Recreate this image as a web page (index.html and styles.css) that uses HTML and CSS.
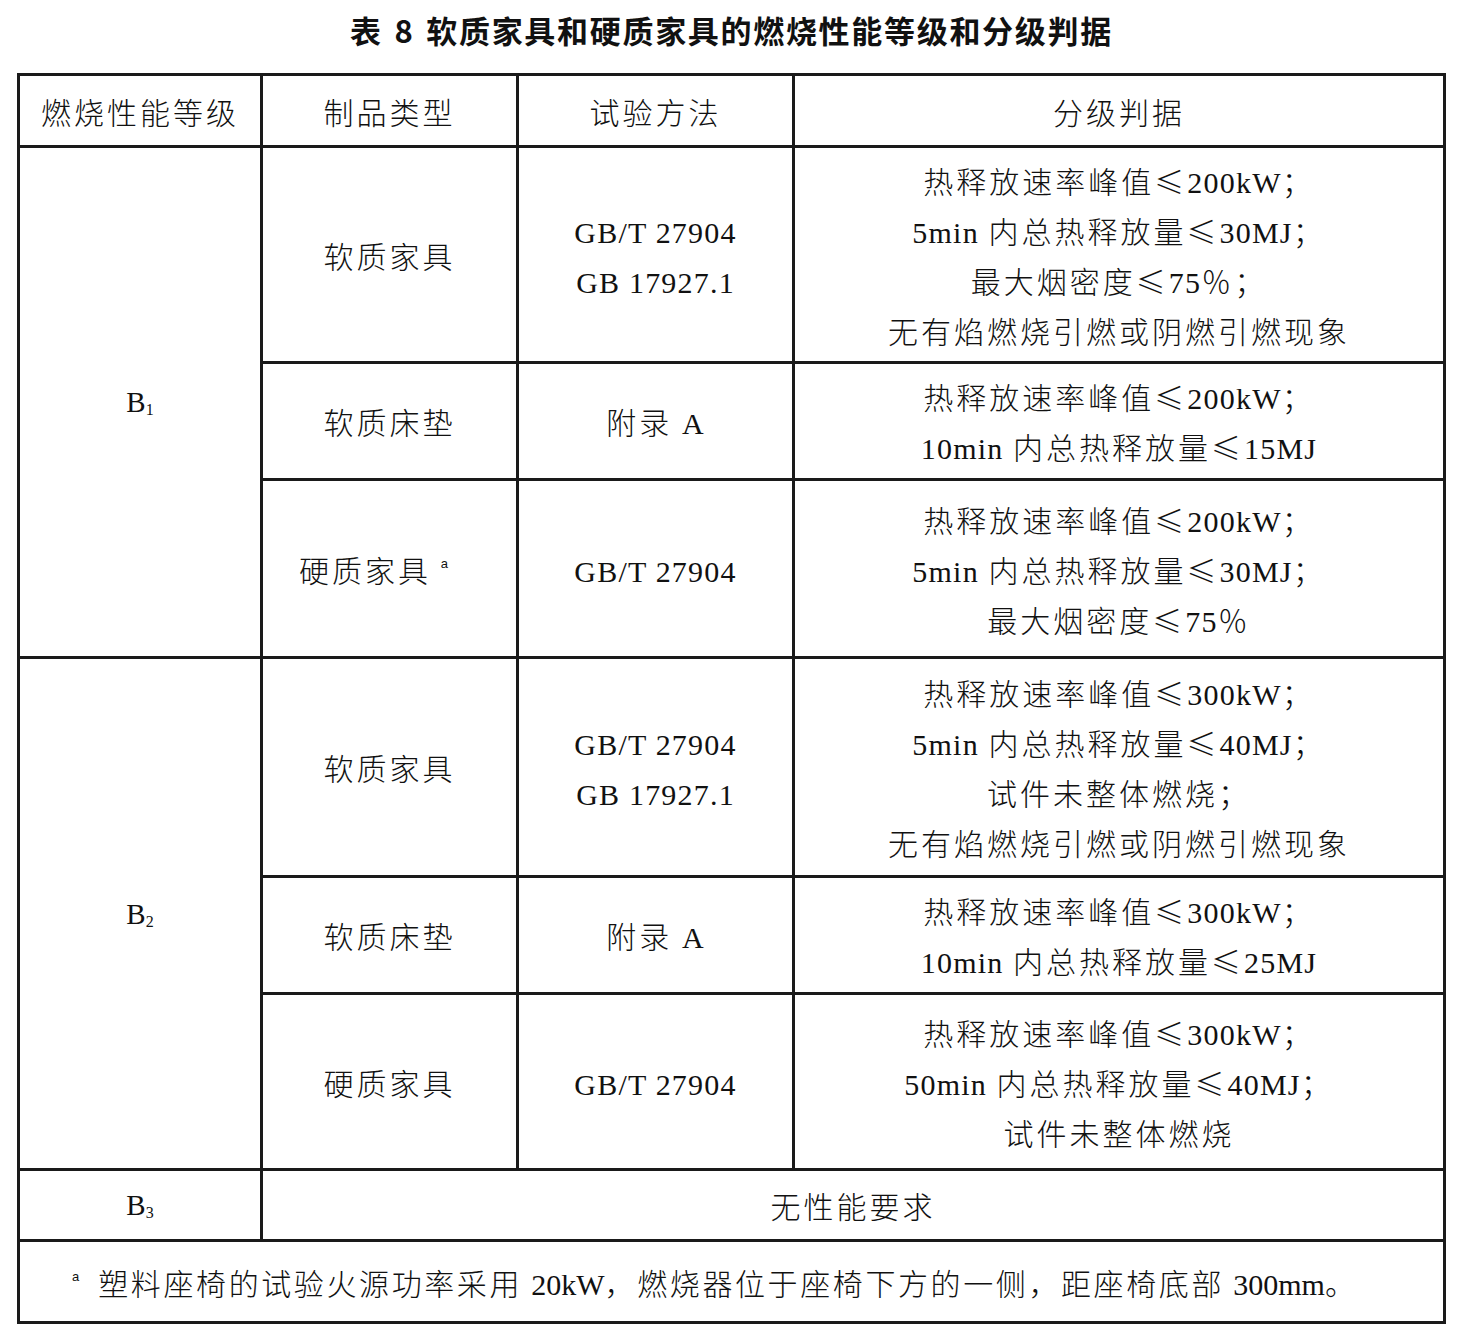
FILE: index.html
```html
<!DOCTYPE html>
<html lang="zh-CN">
<head>
<meta charset="utf-8">
<title>表 8 软质家具和硬质家具的燃烧性能等级和分级判据</title>
<link rel="stylesheet" href="styles.css">
</head>
<body>
<div class="page">
  <h1 class="title">表 8 软质家具和硬质家具的燃烧性能等级和分级判据</h1>
  <table class="grade">
    <colgroup>
      <col class="c1"><col class="c2"><col class="c3"><col class="c4">
    </colgroup>
    <tr class="r-head">
      <td>燃烧性能等级</td>
      <td>制品类型</td>
      <td>试验方法</td>
      <td>分级判据</td>
    </tr>
    <tr class="r1">
      <td rowspan="3" class="lvl">B<sub>1</sub></td>
      <td>软质家具</td>
      <td><span class="lat">GB/T 27904</span><br><span class="lat">GB 17927.1</span></td>
      <td>热释放速率峰值≤<span class="lat">200kW</span>；<br><span class="lat">5min</span> 内总热释放量≤<span class="lat">30MJ</span>；<br>最大烟密度≤<span class="lat">75</span>％；<br>无有焰燃烧引燃或阴燃引燃现象</td>
    </tr>
    <tr class="r2">
      <td>软质床垫</td>
      <td>附录 <span class="lat">A</span></td>
      <td>热释放速率峰值≤<span class="lat">200kW</span>；<br><span class="lat">10min</span> 内总热释放量≤<span class="lat">15MJ</span></td>
    </tr>
    <tr class="r3">
      <td class="noted">硬质家具 <sup class="note">a</sup></td>
      <td><span class="lat">GB/T 27904</span></td>
      <td>热释放速率峰值≤<span class="lat">200kW</span>；<br><span class="lat">5min</span> 内总热释放量≤<span class="lat">30MJ</span>；<br>最大烟密度≤<span class="lat">75</span>％</td>
    </tr>
    <tr class="r4">
      <td rowspan="3" class="lvl">B<sub>2</sub></td>
      <td>软质家具</td>
      <td><span class="lat">GB/T 27904</span><br><span class="lat">GB 17927.1</span></td>
      <td>热释放速率峰值≤<span class="lat">300kW</span>；<br><span class="lat">5min</span> 内总热释放量≤<span class="lat">40MJ</span>；<br>试件未整体燃烧；<br>无有焰燃烧引燃或阴燃引燃现象</td>
    </tr>
    <tr class="r5">
      <td>软质床垫</td>
      <td>附录 <span class="lat">A</span></td>
      <td>热释放速率峰值≤<span class="lat">300kW</span>；<br><span class="lat">10min</span> 内总热释放量≤<span class="lat">25MJ</span></td>
    </tr>
    <tr class="r6">
      <td>硬质家具</td>
      <td><span class="lat">GB/T 27904</span></td>
      <td>热释放速率峰值≤<span class="lat">300kW</span>；<br><span class="lat">50min</span> 内总热释放量≤<span class="lat">40MJ</span>；<br>试件未整体燃烧</td>
    </tr>
    <tr class="r7">
      <td class="lvl">B<sub>3</sub></td>
      <td colspan="3">无性能要求</td>
    </tr>
    <tr class="r-foot">
      <td colspan="4" class="foot"><sup class="note fnote">a</sup>塑料座椅的试验火源功率采用 <span class="lat">20kW</span>，燃烧器位于座椅下方的一侧，距座椅底部 <span class="lat">300mm</span>。</td>
    </tr>
  </table>
</div>
</body>
</html>
```
FILE: styles.css
```css
html, body {
  margin: 0;
  padding: 0;
  background: #ffffff;
}

.page {
  width: 1462px;
  padding: 0 0 0 17px;
  box-sizing: border-box;
  color: #111111;
  font-family: "Noto Sans CJK SC", sans-serif;
}

.title {
  width: 1429px;
  margin: 0;
  height: 73px;
  padding-top: 12px;
  box-sizing: border-box;
  text-align: center;
  font-size: 31px;
  line-height: 36px;
  font-weight: 700;
  letter-spacing: 1.7px;
  word-spacing: 3px;
}

.grade {
  border-collapse: collapse;
  table-layout: fixed;
  width: 1429px;
  border: 3px solid #1a1a1a;
  font-size: 30px;
  font-weight: 300;
  letter-spacing: 3px;
}

.c1 { width: 243px; }
.c2 { width: 256px; }
.c3 { width: 276px; }
.c4 { width: 651px; }

.grade td {
  border: 3px solid #1a1a1a;
  padding: 0;
  text-align: center;
  vertical-align: middle;
  line-height: 50px;
}

.r-head { height: 72px; }
.r1 { height: 216px; }
.r2 { height: 117px; }
.r3 { height: 178px; }
.r4 { height: 219px; }
.r5 { height: 117px; }
.r6 { height: 176px; }
.r7 { height: 71px; }
.r-foot { height: 82px; }

.lat {
  font-family: "Liberation Serif", serif;
  font-size: 30px;
  letter-spacing: 1.2px;
  line-height: 0;
}

.lvl {
  font-family: "Liberation Serif", serif;
  font-size: 29px;
  letter-spacing: 0;
}

.lvl sub {
  font-size: 16px;
  vertical-align: -3px;
  line-height: 0;
}

.note {
  font-family: "Liberation Sans", sans-serif;
  font-size: 13px;
  vertical-align: 14px;
  line-height: 0;
  letter-spacing: 0;
}

.grade td.noted {
  padding-right: 32px;
}

.fnote {
  margin-right: 19px;
}

.grade td.foot {
  text-align: left;
  padding-left: 52px;
  letter-spacing: 2.6px;
}

.grade td.foot .lat {
  letter-spacing: 0;
}
```
